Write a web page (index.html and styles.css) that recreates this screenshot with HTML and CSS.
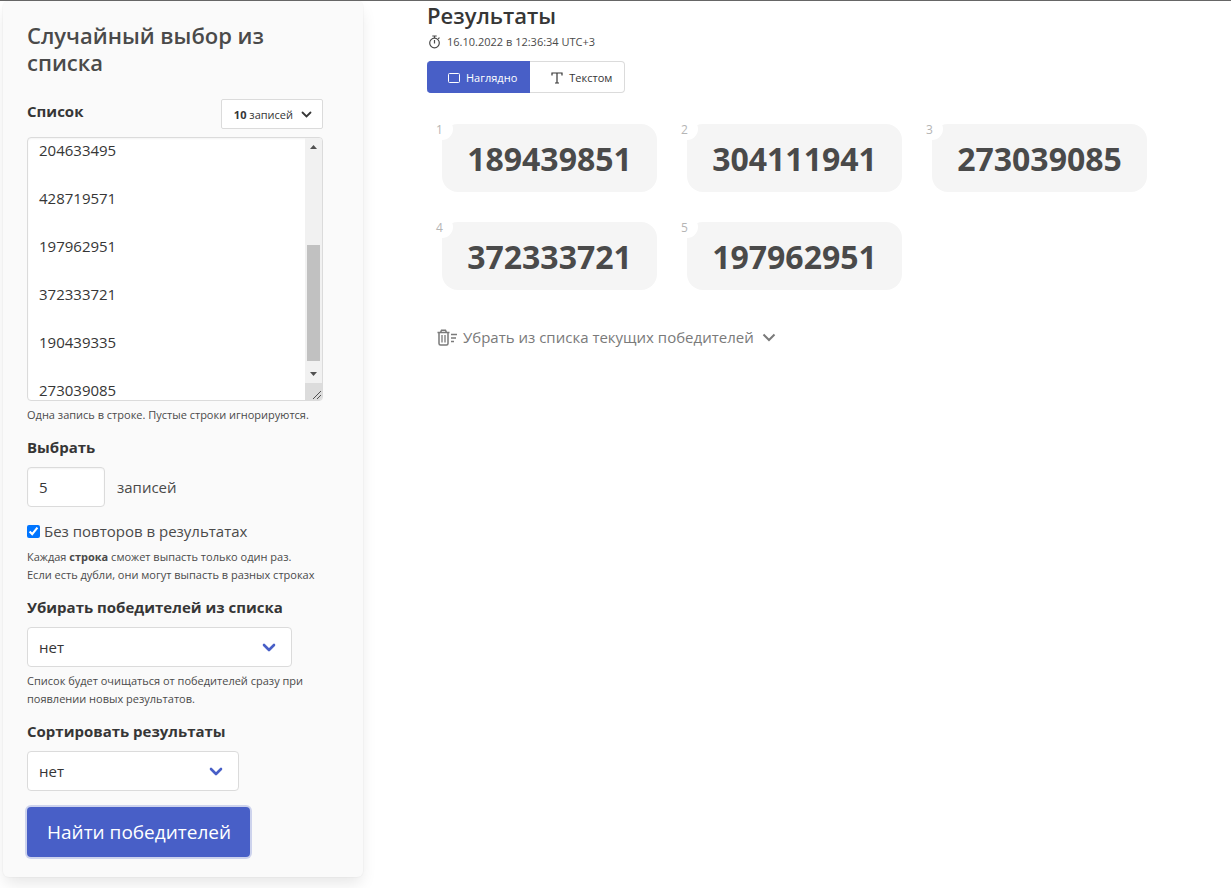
FILE: index.html
```html
<!DOCTYPE html>
<html lang="ru">
<head>
    <meta charset="UTF-8">
    <meta name="viewport" content="width=device-width, initial-scale=1.0">
    <title>Случайный выбор из списка</title>
    <link rel="stylesheet" href="styles.css">
</head>
<body>

<div class="page">
    <form class="panel">
        <h1 class="title">Случайный выбор из списка</h1>

        <div class="list-head">
            <label class="label" for="list">Список</label>
            <button type="button" class="count-button">
                <span><b>10</b> записей</span>
                <svg width="11" height="8" viewBox="0 0 11 8"><path d="M1.5 1.5l4 4 4-4" fill="none" stroke="currentColor" stroke-width="1.8" stroke-linecap="round"/></svg>
            </button>
        </div>
        <div class="list-box">
            <textarea class="textarea" id="list">
189439851

304111941

415207638

286150473

204633495

428719571

197962951

372333721

190439335

273039085</textarea>
            <div class="scrollbar">
                <svg class="scroll-arrow" viewBox="0 0 17 17"><path d="M5 11l3.500-4 3.500 4z" fill="#505050"/></svg>
                <div class="scroll-track" id="track"><div class="scroll-thumb" id="thumb"></div></div>
                <svg class="scroll-arrow" viewBox="0 0 17 17"><path d="M5 6l3.500 4 3.500-4z" fill="#505050"/></svg>
                <svg class="scroll-corner" viewBox="0 0 17 17"><path d="M8 16l8-8M12 16l4-4" stroke="#505050"/></svg>
            </div>
        </div>
        <p class="help">Одна запись в строке. Пустые строки игнорируются.</p>

        <label class="label" for="count">Выбрать</label>
        <div class="count-row">
            <input class="input" type="text" id="count" value="5">
            <span>записей</span>
        </div>

        <label class="checkbox"><input type="checkbox" checked> Без повторов в результатах</label>
        <p class="help">Каждая <b>строка</b> сможет выпасть только один раз.<br>Если есть дубли, они могут выпасть в разных строках</p>

        <label class="label" for="remove">Убирать победителей из списка</label>
        <select class="select select-wide" id="remove">
            <option>нет</option>
            <option>да</option>
        </select>
        <p class="help">Список будет очищаться от победителей сразу при появлении новых результатов.</p>

        <label class="label" for="sort">Сортировать результаты</label>
        <select class="select" id="sort">
            <option>нет</option>
            <option>да</option>
        </select>

        <button type="button" class="submit">Найти победителей</button>
    </form>

    <main class="results">
        <h2 class="title title-dark">Результаты</h2>
        <p class="date">
            <svg width="13" height="14" viewBox="0 0 13 14" fill="none" stroke="currentColor" stroke-width="1.2"><circle cx="6.5" cy="8" r="4.8"/><path d="M6.5 5v3.4M6.5 3V1M4.3 1h4.4M10.2 3.8l1.3-1.2"/></svg>
            <span>16.10.2022 в 12:36:34 UTC+3</span>
        </p>

        <div class="buttons">
            <button type="button" class="view-button active">
                <svg width="12" height="10" viewBox="0 0 12 10"><rect x="0.5" y="0.5" width="11" height="9" rx="1" fill="none" stroke="currentColor"/></svg>
                Наглядно
            </button>
            <button type="button" class="view-button">
                <svg width="12" height="12" viewBox="0 0 12 12" fill="none" stroke="currentColor"><path d="M1 3.5V1h10v2.500M6 1v10M4 11h4" stroke-width="1.200"/></svg>
                Текстом
            </button>
        </div>

        <div class="cards">
            <div class="card"><span class="num">1</span>189439851</div>
            <div class="card"><span class="num">2</span>304111941</div>
            <div class="card"><span class="num">3</span>273039085</div>
            <div class="card"><span class="num">4</span>372333721</div>
            <div class="card"><span class="num">5</span>197962951</div>
        </div>

        <button type="button" class="remove-button">
            <svg width="20" height="17" viewBox="0 0 20 17" fill="none" stroke="currentColor" stroke-width="1.5"><path d="M0.500 3.500h12M3.500 3.500l1-2.300h4l1 2.300M2 3.500v11q0 1.500 1.500 1.500h6q1.500 0 1.500-1.500v-11"/><path d="M5 6v7.500M8 6v7.500" stroke-width="1.300"/><path d="M14 5.500h6M14 9h5M14 12.500h3"/></svg>
            <span>Убрать из списка текущих победителей</span>
            <svg width="14" height="9" viewBox="0 0 14 9"><path d="M1.500 1.500l5.500 5.500 5.500-5.500" fill="none" stroke="currentColor" stroke-width="2"/></svg>
        </button>
    </main>
</div>

<script>
    const list = document.getElementById("list");
    const track = document.getElementById("track");
    const thumb = document.getElementById("thumb");

    // Размер и положение ползунка
    function updateThumb() {
        const ratio = track.clientHeight / list.scrollHeight;
        thumb.style.height = list.clientHeight * ratio + "px";
        thumb.style.marginTop = list.scrollTop * ratio + "px";
    }

    list.addEventListener("scroll", updateThumb);
    list.addEventListener("input", updateThumb);
    new ResizeObserver(updateThumb).observe(list);

    // Прокручиваем список к последним записям
    list.scrollTop = 202;
    updateThumb();
</script>

</body>
</html>
```

FILE: styles.css
```css
* {
    box-sizing: border-box;
}
body {
    margin: 0;
    min-height: 100vh;
    border-top: 1px solid #666;
    background-color: #fff;
    color: #4a4a4a;
    font-family: "Open Sans", "Noto Sans", sans-serif;
    font-size: 15px;
    line-height: 24px;
}
button, input, select, textarea {
    font: inherit;
    color: #363636;
    margin: 0;
}
button {
    cursor: pointer;
}
.page {
    display: flex;
    align-items: flex-start;
    gap: 64px;
    padding-left: 3px;
}
.panel {
    width: 360px;
    flex-shrink: 0;
    padding: 21px 40px 20px 24px;
    background-color: #fafafa;
    border-radius: 6px;
    box-shadow: 0 8px 16px -2px rgba(10, 10, 10, 0.1), 0 0 0 1px rgba(10, 10, 10, 0.02);
}
.title {
    margin: 0;
    font-size: 22px;
    font-weight: 600;
    line-height: 27px;
}
.title-dark {
    color: #363636;
}
.label {
    display: block;
    margin-bottom: 8px;
    color: #363636;
    font-weight: 700;
}
.list-head {
    display: flex;
    justify-content: space-between;
    align-items: flex-start;
    margin: 23px 0 8px;
}
.list-head .label {
    margin: 0;
}
.count-button {
    display: flex;
    align-items: center;
    gap: 8px;
    height: 30px;
    padding: 1px 10px 0 12px;
    background-color: #fff;
    border: 1px solid #dbdbdb;
    border-radius: 2px;
    font-size: 11px;
}
.list-box {
    position: relative;
}
.textarea {
    display: block;
    width: 100%;
    height: 264px;
    padding: 10px 28px 10px 11px;
    background-color: #fff;
    border: 1px solid #dbdbdb;
    border-radius: 4px;
    box-shadow: inset 0 1px 2px rgba(10, 10, 10, 0.05);
    overflow-y: scroll;
    resize: vertical;
}
.scrollbar {
    position: absolute;
    top: 1px;
    right: 1px;
    bottom: 1px;
    display: flex;
    flex-direction: column;
    width: 17px;
    background-color: #f1f1f1;
    border-radius: 0 3px 3px 0;
    overflow: hidden;
    pointer-events: none;
}
.scroll-arrow, .scroll-corner {
    display: block;
    height: 17px;
    flex-shrink: 0;
}
.scroll-track {
    flex: 1;
    padding: 0 2px;
    overflow: hidden;
}
.scroll-thumb {
    background-color: #c1c1c1;
}
.scroll-corner {
    background-color: #dcdcdc;
}
.help {
    margin: 5px 0 11px;
    font-size: 11px;
    line-height: 18px;
}
.count-row {
    display: flex;
    align-items: center;
    gap: 12px;
    margin-bottom: 12px;
}
.input {
    width: 78px;
    height: 40px;
    padding: 0 11px;
    background-color: #fff;
    border: 1px solid #dbdbdb;
    border-radius: 4px;
    box-shadow: inset 0 1px 2px rgba(10, 10, 10, 0.05);
}
.checkbox {
    display: flex;
    align-items: center;
    gap: 4px;
}
.checkbox input {
    width: 13px;
    height: 13px;
    accent-color: #0075ff;
}
.select {
    display: block;
    width: 212px;
    height: 40px;
    padding: 0 11px;
    appearance: none;
    background: #fff url("data:image/svg+xml,%3Csvg xmlns='http://www.w3.org/2000/svg' width='14' height='9'%3E%3Cpath d='M2 2l5 5 5-5' fill='none' stroke='%23485fc7' stroke-width='2.6' stroke-linecap='round' stroke-linejoin='round'/%3E%3C/svg%3E") right 15px center no-repeat;
    border: 1px solid #dbdbdb;
    border-radius: 4px;
}
.select-wide {
    width: 265px;
}
.submit {
    height: 50px;
    margin-top: 16px;
    padding: 0 19px 0 20px;
    background-color: #485fc7;
    border: none;
    border-radius: 4px;
    box-shadow: 0 0 0 2px rgba(72, 95, 199, 0.25);
    color: #fff;
    font-size: 19px;
}
.results {
    flex: 1;
    padding-top: 1px;
}
.date {
    display: flex;
    align-items: center;
    gap: 6px;
    margin: 4px 0 10px;
    padding-left: 1px;
    font-size: 11px;
    line-height: 18px;
}
.buttons {
    display: flex;
}
.view-button {
    display: flex;
    align-items: center;
    gap: 6px;
    height: 32px;
    padding: 1px 12px 0 21px;
    background-color: #fff;
    border: 1px solid #dbdbdb;
    border-left: none;
    border-radius: 0 4px 4px 0;
    font-size: 11px;
}
.view-button.active {
    background-color: #485fc7;
    border-color: #485fc7;
    border-radius: 4px 0 0 4px;
    color: #fff;
}
.cards {
    display: flex;
    flex-wrap: wrap;
    gap: 30px;
    margin: 31px 15px 35px;
}
.card {
    position: relative;
    min-width: 215px;
    padding: 13px 25px 11px;
    background-color: #f5f5f5;
    border-radius: 16px;
    font-size: 32px;
    font-weight: 700;
    line-height: 44px;
    text-align: center;
}
.num {
    position: absolute;
    top: -6px;
    left: -11px;
    width: 22px;
    height: 22px;
    padding-left: 5px;
    background-color: #fff;
    border-radius: 11px;
    color: #b5b5b5;
    font-size: 12px;
    font-weight: 400;
    line-height: 24px;
    text-align: left;
}
.remove-button {
    display: flex;
    align-items: center;
    gap: 6px;
    padding: 0 10px;
    background: none;
    border: none;
    color: #7a7a7a;
}
.remove-button svg:last-child {
    margin-left: 2px;
}
```
